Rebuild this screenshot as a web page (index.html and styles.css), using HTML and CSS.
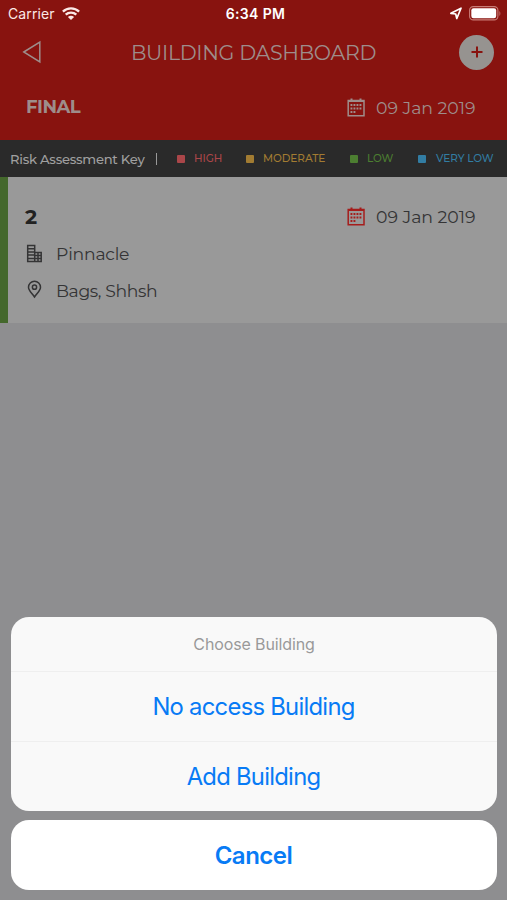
FILE: index.html
```html
<!DOCTYPE html>
<html lang="en">
<head>
<meta charset="utf-8">
<title>Building Dashboard</title>
<link rel="stylesheet" href="styles.css">
</head>
<body>
<svg class="defs" width="0" height="0">
  <symbol id="calendar" viewBox="0 0 18 19">
    <path d="M1.200 2.500h15.800v15.300H1.200z" fill="none" stroke="currentColor" stroke-width="1.500"/>
    <path d="M4.500 .5v3M13.500 .5v3" stroke="currentColor" stroke-width="2"/>
    <path d="M3.500 7h11.500M3.500 10.500h11.500M3.500 14h5" stroke="currentColor" stroke-width="1.800" stroke-dasharray="1.900 1.100"/>
    <path d="M1 3.200h16" stroke="currentColor" stroke-width="1.600"/>
  </symbol>
</svg>
<div class="screen">
  <header class="header">
    <div class="status">
      <div class="carrier"><span class="carrier-name">Carrier</span>
        <svg class="wifi" width="18" height="13" viewBox="0 0 18 13" fill="none" stroke="currentColor" stroke-width="2.300"><path d="M.9 4.600C5.300.3 12.700.3 17.100 4.600M3.700 7.700c3-2.900 7.600-2.900 10.600 0"/><path d="M5.900 9.900c1.800-1.600 4.400-1.600 6.200 0L9 13z" fill="currentColor" stroke="none"/></svg>
      </div>
      <span class="clock">6:34 PM</span>
      <div class="power">
        <svg width="12" height="13" viewBox="0 0 12 13" fill="none" stroke="currentColor" stroke-width="1.700" stroke-linejoin="round"><path d="M.9 6.300 11 1.200 6.800 11.500 5.700 7z"/></svg>
        <svg width="32" height="15" viewBox="0 0 32 15"><rect x=".6" y=".6" width="28.300" height="13.300" rx="3.700" fill="none" stroke="#c97c76" stroke-width="1.100"/><rect x="2.300" y="2.300" width="24.900" height="9.900" rx="2.200" fill="#fff"/><path d="M30.200 5v5c1.700-1 1.700-4 0-5z" fill="#b45b55"/></svg>
      </div>
    </div>
    <div class="navbar">
      <svg class="back" width="20" height="24" viewBox="0 0 20 24" fill="none" stroke="currentColor" stroke-width="1.500"><path d="M1.800 12 17.800 2v20z"/></svg>
      <h1 class="title">BUILDING DASHBOARD</h1>
      <div class="add"><svg width="12" height="12" viewBox="0 0 12 12" stroke="#88130f" stroke-width="2"><path d="M6 .5v11M.5 6h11"/></svg></div>
    </div>
    <div class="summary">
      <span class="stage">FINAL</span>
      <div class="date"><svg class="cal" width="18" height="19"><use href="#calendar"/></svg><span class="date-text">09 Jan 2019</span></div>
    </div>
  </header>
  <div class="legend">
    <span class="legend-title">Risk Assessment Key</span><span class="bar"></span>
    <span class="key high"><i></i><b>HIGH</b></span>
    <span class="key moderate"><i></i><b>MODERATE</b></span>
    <span class="key low"><i></i><b>LOW</b></span>
    <span class="key very-low"><i></i><b>VERY LOW</b></span>
  </div>
  <main class="card">
    <div class="card-top"><span class="number">2</span>
      <div class="date"><svg class="cal" width="18" height="19"><use href="#calendar"/></svg><span class="date-text">09 Jan 2019</span></div>
    </div>
    <div class="line">
      <svg width="18" height="20" viewBox="0 0 18 20" fill="none" stroke="currentColor" stroke-width="1.500"><path d="M2.700 1.500h7v16h-7zM9.700 8.500h6.500v9H9.700M2.700 4.700h7M2.700 7.900h7M2.700 11.100h7M2.700 14.400h13.500M9.700 11.500h6.500M13 8.500v9"/></svg>
      <span class="name">Pinnacle</span>
    </div>
    <div class="line">
      <svg width="18" height="20" viewBox="0 0 18 20" fill="none" stroke="currentColor" stroke-width="1.500"><path d="M9.500 17C7 13.300 3.500 10.500 3.500 7.200a6 6 0 0 1 12 0c0 3.300-3.500 6.100-6 9.800z"/><circle cx="9.500" cy="7.200" r="2.100"/></svg>
      <span class="place">Bags, Shhsh</span>
    </div>
  </main>
  <section class="sheet">
    <div class="options">
      <div class="prompt"><span>Choose Building</span></div>
      <div class="option"><span class="no-access">No access Building</span></div>
      <div class="option"><span class="add-building">Add Building</span></div>
    </div>
    <div class="cancel"><span>Cancel</span></div>
  </section>
</div>
</body>
</html>
```
FILE: styles.css
```css
* { box-sizing: border-box; }
body { margin: 0; font-family: Montserrat, Inter, sans-serif; }
.defs { display: block; }
svg { flex: none; }
.screen { width: 507px; height: 900px; display: flex; flex-direction: column; background: #8e8e90; overflow: hidden; }
.header { height: 140px; background: #88130f; color: #9e8d8b; flex: none; }
.status { height: 27px; padding: 0 6px 0 8px; display: grid; grid-template-columns: 1fr auto 1fr; align-items: center; color: #fff; font-family: Inter, sans-serif; font-size: 14px; line-height: 27px; }
.carrier { display: flex; align-items: center; gap: 7px; color: #fbe9e7; }
.carrier-name { letter-spacing: .1px; }
.clock { font-weight: 600; letter-spacing: .35px; padding-left: 2px; }
.power { display: flex; align-items: center; justify-content: flex-end; gap: 7px; }
.navbar { height: 50px; padding: 0 13px 0 22px; display: grid; grid-template-columns: 52px 1fr 61px; align-items: center; }
.title { margin: 0; padding-top: 1px; font-size: 20.5px; font-weight: 400; text-align: center; white-space: nowrap; letter-spacing: -.3px; }
.add { justify-self: end; width: 35px; height: 35px; border-radius: 50%; background: #969390; display: flex; align-items: center; justify-content: center; }
.summary { height: 60px; padding: 0 30px 0 26px; display: flex; align-items: center; justify-content: space-between; }
.stage { font-size: 18px; font-weight: 700; letter-spacing: -.5px; }
.date { display: flex; align-items: center; gap: 11px; width: 130px; font-size: 17.3px; font-weight: 400; white-space: nowrap; }
.date-text { letter-spacing: 0; }
.legend { height: 37px; flex: none; display: flex; align-items: center; background: #2a2a2a; padding: 0 0 0 10px; white-space: nowrap; }
.legend-title { width: 146px; font-size: 13.1px; font-weight: 500; letter-spacing: -.25px; color: #a0a0a0; }
.bar { width: 1px; height: 12px; background: #999; margin-right: 20px; }
.key { display: flex; align-items: center; font-size: 10.5px; letter-spacing: -.05px; }
.key b { font-weight: 500; }
.key i { width: 8px; height: 8px; background: currentColor; margin-right: 9px; border-radius: 1px; }
.high { width: 69px; color: #aa4649; }
.moderate { width: 104px; color: #a27c32; }
.low { width: 68px; color: #4c7e31; }
.very-low { color: #327da3; }
.very-low i { margin-right: 10px; }
.card { height: 146px; flex: none; padding: 21px 30px 0 17px; border-left: 8px solid #44682c; background: #999; color: #343435; font-size: 17.2px; font-weight: 400; }
.card-top { height: 37px; display: flex; align-items: center; justify-content: space-between; }
.number { font-size: 20.5px; font-weight: 700; color: #222; }
.card .cal { color: #a51d1c; }
.line { height: 37px; display: flex; align-items: center; gap: 13px; }
.line + .line { height: 36px; }
.name { letter-spacing: -.2px; }
.place { letter-spacing: -.35px; }
.sheet { margin: auto 10px 10px 11px; font-family: Inter, sans-serif; color: #087bf5; text-align: center; }
.options { height: 194px; border-radius: 18px; background: #f9f9f9; overflow: hidden; }
.prompt { height: 54px; line-height: 55px; color: #999; font-size: 16px; letter-spacing: -.13px; }
.option { height: 70px; border-top: 1px solid #efefef; padding-right: 1px; line-height: 70px; font-size: 23.8px; letter-spacing: -.73px; }
.cancel { height: 70px; margin-top: 9px; padding-right: 1px; border-radius: 18px; background: #fff; line-height: 71px; font-size: 24px; font-weight: 600; letter-spacing: -.5px; }
```
